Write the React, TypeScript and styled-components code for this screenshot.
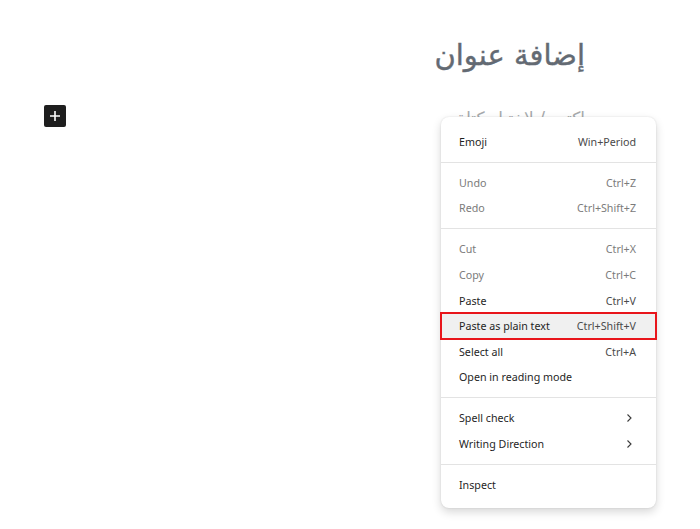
import React from 'react';
import styled, { createGlobalStyle } from 'styled-components';

const GlobalStyle = createGlobalStyle`
  html, body {
    margin: 0;
    padding: 0;
    background: #ffffff;
  }
  body {
    font-family: "Noto Sans", "DejaVu Sans", sans-serif;
  }
`;

const Page = styled.div`
  position: relative;
  width: 700px;
  height: 529px;
  overflow: hidden;
  background: #ffffff;
`;

const Editor = styled.div`
  display: flex;
  flex-direction: column;
  padding: 35px 115px 0 44px;
`;

const Title = styled.h1`
  margin: 0;
  direction: rtl;
  text-align: right;
  font-family: "DejaVu Sans", "Noto Sans", sans-serif;
  font-size: 29px;
  font-weight: 400;
  line-height: 40px;
  color: #636a73;
  -webkit-text-stroke: 0.4px #636a73;
`;

const BlockRow = styled.div`
  display: flex;
  align-items: center;
  justify-content: space-between;
  margin-top: 29px;
`;

const InserterButton = styled.button`
  width: 22px;
  height: 22px;
  padding: 0;
  border: none;
  border-radius: 2px;
  background: #1e1e1e;
  display: flex;
  align-items: center;
  justify-content: center;
  cursor: pointer;
`;

const Placeholder = styled.span`
  direction: rtl;
  font-family: "DejaVu Sans", sans-serif;
  font-size: 17px;
  color: #a7aaad;
  margin-top: 4px;
`;

const Menu = styled.div`
  position: absolute;
  left: 441px;
  top: 117px;
  width: 215px;
  padding: 12px 0 10px;
  box-sizing: border-box;
  background: #ffffff;
  border-radius: 8px;
  box-shadow: 0 4px 10px rgba(0, 0, 0, 0.16), 0 0 2px rgba(0, 0, 0, 0.12);
  font-family: "Noto Sans", "Open Sans", sans-serif;
  font-size: 10.7px;
`;

const Item = styled.div<{ $disabled?: boolean; $marked?: boolean }>`
  display: flex;
  align-items: center;
  justify-content: space-between;
  height: 25.6px;
  padding: 0 20px 0 18px;
  box-sizing: border-box;
  color: ${p => (p.$disabled ? '#7b7b7b' : '#1f1f1f')};
  background: ${p => (p.$marked ? '#f0f0f0' : 'transparent')};
  outline: ${p => (p.$marked ? '2px solid #e8151b' : 'none')};
  outline-offset: -1px;
`;

const Shortcut = styled.span<{ $disabled?: boolean }>`
  color: ${p => (p.$disabled ? '#7b7b7b' : '#4a4a4a')};
`;

const Chevron = styled.svg`
  width: 8px;
  height: 10px;
  margin-right: 3px;
`;

const Separator = styled.div`
  height: 1px;
  margin: 7px 0 7.4px;
  background: #e3e3e3;
`;

type Entry =
  | { label: string; shortcut?: string; disabled?: boolean; sub?: boolean; marked?: boolean }
  | 'sep';

const entries: Entry[] = [
  { label: 'Emoji', shortcut: 'Win+Period' },
  'sep',
  { label: 'Undo', shortcut: 'Ctrl+Z', disabled: true },
  { label: 'Redo', shortcut: 'Ctrl+Shift+Z', disabled: true },
  'sep',
  { label: 'Cut', shortcut: 'Ctrl+X', disabled: true },
  { label: 'Copy', shortcut: 'Ctrl+C', disabled: true },
  { label: 'Paste', shortcut: 'Ctrl+V' },
  { label: 'Paste as plain text', shortcut: 'Ctrl+Shift+V', marked: true },
  { label: 'Select all', shortcut: 'Ctrl+A' },
  { label: 'Open in reading mode' },
  'sep',
  { label: 'Spell check', sub: true },
  { label: 'Writing Direction', sub: true },
  'sep',
  { label: 'Inspect' },
];

function ContextMenu(): JSX.Element {
  return (
    <Menu>
      {entries.map((e, i) =>
        e === 'sep' ? (
          <Separator key={i} />
        ) : (
          <Item key={i} $disabled={e.disabled} $marked={e.marked}>
            <span>{e.label}</span>
            {e.shortcut && <Shortcut $disabled={e.disabled}>{e.shortcut}</Shortcut>}
            {e.sub && (
              <Chevron viewBox="0 0 8 10">
                <path d="M2.5 1.5 L6 5 L2.5 8.5" fill="none" stroke="#3a3a3a" strokeWidth="1.1" />
              </Chevron>
            )}
          </Item>
        )
      )}
    </Menu>
  );
}

export default function App(): JSX.Element {
  return (
    <Page>
      <GlobalStyle />
      <Editor>
        <Title>إضافة عنوان</Title>
        <BlockRow>
          <InserterButton aria-label="إضافة كتلة">
            <svg width="14" height="14" viewBox="0 0 14 14">
              <path d="M7 2 V12 M2 7 H12" stroke="#ffffff" strokeWidth="1.6" />
            </svg>
          </InserterButton>
          <Placeholder>اكتب / لاختيار كتلة</Placeholder>
        </BlockRow>
      </Editor>
      <ContextMenu />
    </Page>
  );
}
